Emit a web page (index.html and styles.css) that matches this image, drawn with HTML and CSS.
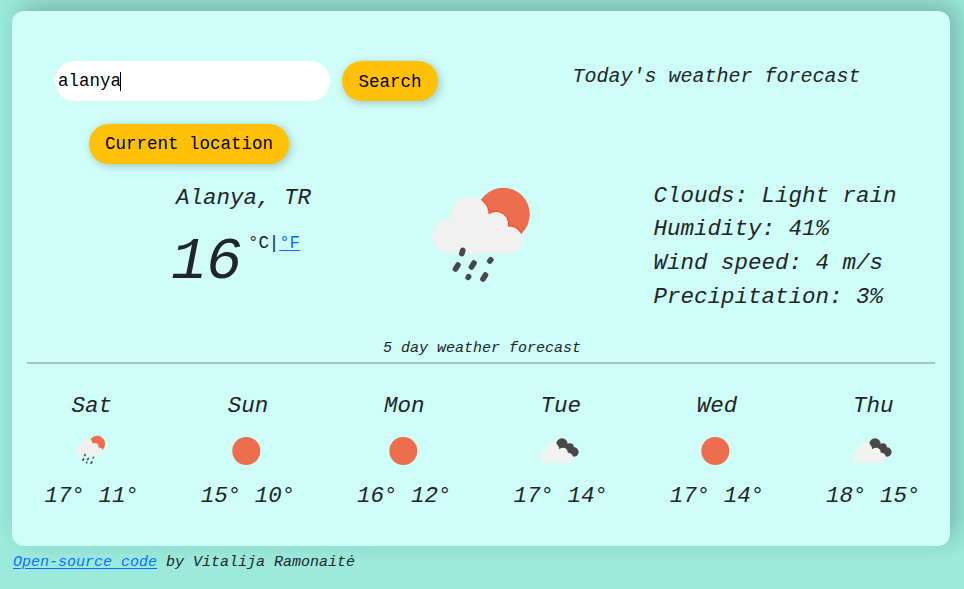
FILE: index.html
```html
<!DOCTYPE html>
<html lang="en">
<head>
<meta charset="utf-8">
<title>Weather forecast</title>
<link rel="stylesheet" href="styles.css">
</head>
<body>
<svg class="defs" aria-hidden="true">
  <clipPath id="sun-clip"><circle cx="83.3" cy="39.3" r="26.5"/></clipPath>
  <symbol id="rain" viewBox="-4 0 130 120">
    <circle cx="83.3" cy="39.3" r="26.5" fill="#ec6e4c"/>
    <g clip-path="url(#sun-clip)" fill="#f05030"><circle cx="50" cy="40" r="20"/><circle cx="76" cy="49" r="13.3"/><circle cx="89" cy="65" r="15"/></g>
    <g fill="#f1f1f2"><circle cx="50" cy="40" r="18.7"/><circle cx="29.5" cy="61" r="17"/><circle cx="76" cy="49" r="12"/><circle cx="89" cy="65" r="13.4"/><path d="M29 48H76L90 60V78.4H29Z"/></g>
    <g stroke="#48484a" stroke-width="5.6" stroke-linecap="round"><path d="M41.8 78.5L42.8 75.5M35.5 94L38 90M51.5 92L54 88M69.8 86L70.8 84.8M48.2 102.3L48.6 101.7M63 104L65.5 100"/></g>
  </symbol>
  <symbol id="sun" viewBox="0 0 60 50"><circle cx="30.3" cy="26" r="14" fill="#ec6e4c"/></symbol>
  <symbol id="clouds" viewBox="-2 0 180 150">
    <g fill="#484848"><circle cx="97" cy="57" r="17"/><circle cx="121" cy="66" r="11.5"/><circle cx="133" cy="81" r="14"/><path d="M90 60L115 57L132 90L112 92Z"/></g>
    <g fill="#f2f2f0"><circle cx="68" cy="73" r="20.5"/><circle cx="47" cy="96" r="17"/><circle cx="100" cy="82" r="14"/><circle cx="115" cy="98" r="15"/><path d="M46 80H100L116 94V113H46Z"/></g>
  </symbol>
</svg>
<main class="card">
  <header class="top">
    <form class="search">
      <div class="field" role="textbox">alanya<span class="caret"></span></div>
      <button class="btn" type="button">Search</button>
    </form>
    <h1 class="title">Today's weather forecast</h1>
  </header>
  <button class="btn location" type="button">Current location</button>
  <section class="current">
    <div class="place">
      <h2 class="city">Alanya, TR</h2>
      <div class="temp"><span class="degrees">16</span><span class="units">°C|<a href="#">°F</a></span></div>
    </div>
    <svg class="icon-large"><use href="#rain"/></svg>
    <ul class="details">
      <li>Clouds: Light rain</li>
      <li>Humidity: 41%</li>
      <li>Wind speed: 4 m/s</li>
      <li>Precipitation: 3%</li>
    </ul>
  </section>
  <h3 class="subtitle">5 day weather forecast</h3>
  <section class="forecast">
    <div class="day"><span>Sat</span><svg class="icon-small rain-small"><use href="#rain"/></svg><span>17° 11°</span></div>
    <div class="day"><span>Sun</span><svg class="icon-small"><use href="#sun"/></svg><span>15° 10°</span></div>
    <div class="day"><span>Mon</span><svg class="icon-small"><use href="#sun"/></svg><span>16° 12°</span></div>
    <div class="day"><span>Tue</span><svg class="icon-small"><use href="#clouds"/></svg><span>17° 14°</span></div>
    <div class="day"><span>Wed</span><svg class="icon-small"><use href="#sun"/></svg><span>17° 14°</span></div>
    <div class="day"><span>Thu</span><svg class="icon-small"><use href="#clouds"/></svg><span>18° 15°</span></div>
  </section>
</main>
<footer class="footer"><a href="#">Open-source code</a> by Vitalija Ramonaitė</footer>
</body>
</html>
```
FILE: styles.css
```css
* { box-sizing: border-box; }
body {
  margin: 0;
  padding: 11px 14px 0 12px;
  height: 589px;
  overflow: hidden;
  background: #9beadc;
  color: #212529;
  font-family: "Liberation Mono", monospace;
}
h1, h2, h3, ul { margin: 0; padding: 0; font-weight: 400; }
a { color: #0d6efd; text-underline-offset: 2px; }
.defs { position: absolute; width: 0; height: 0; }
.card {
  height: 535px;
  padding-top: 50px;
  border-radius: 12px;
  background: #cffdf8;
  box-shadow: 8px -8px 24px rgba(0, 0, 0, .22);
}
.top { display: grid; grid-template-columns: 1fr 1fr; height: 63px; }
.search { display: flex; gap: 12px; padding-left: 43px; }
.field {
  display: flex;
  align-items: center;
  width: 275px;
  height: 40px;
  padding: 0 3px;
  border-radius: 20px;
  background: #fff;
  color: #000;
  font-size: 17.5px;
}
.caret { width: 1px; height: 19px; margin-left: -1px; background: #000; }
.btn {
  height: 40px;
  width: 96px;
  padding: 1px 0 0;
  border: 0;
  border-radius: 20px;
  background: #ffc107;
  color: #000;
  font: 17.5px "Liberation Mono", monospace;
  box-shadow: 2px 2px 8px rgba(0, 0, 0, .22);
}
.location { display: block; width: 200px; padding-top: 0; margin-left: 77px; }
.title { text-align: center; font-size: 20px; font-style: italic; line-height: 31px; padding-left: 2px; }
.current {
  display: grid;
  grid-template-columns: 404px 130px 1fr;
  height: 173px;
  padding-top: 11px;
}
.place { padding-left: 164px; font-style: italic; }
.city { font-size: 22.5px; font-style: italic; line-height: 46px; }
.temp { display: flex; margin-left: -5px; }
.degrees { font-size: 60px; line-height: 82px; letter-spacing: -1px; width: 77px; }
.units { font-size: 17.5px; font-style: normal; line-height: 44px; letter-spacing: -.1px; }
.icon-large { width: 130px; height: 120px; }
.details {
  padding: 4.5px 0 0 107.5px;
  list-style: none;
  font-size: 22.5px;
  font-style: italic;
  line-height: 33.75px;
}
.subtitle {
  height: 27px;
  margin: 0 15px;
  padding-left: 2px;
  border-bottom: 2px solid #a5c7c6;
  text-align: center;
  font-size: 15px;
  font-style: italic;
  line-height: 23px;
}
.forecast { display: grid; grid-template-columns: repeat(6, 1fr); padding-top: 25px; }
.day {
  display: flex;
  flex-direction: column;
  align-items: center;
  font-size: 22.5px;
  font-style: italic;
  line-height: 34px;
}
.day span { padding-left: 3px; }
.icon-small { width: 60px; height: 50px; margin: 2px 0 4px; }
.rain-small { width: 39px; height: 36px; margin: 9px 0 11px; }
.footer { padding: 5px 0 0 1px; font-size: 15px; font-style: italic; line-height: 23px; }
```
